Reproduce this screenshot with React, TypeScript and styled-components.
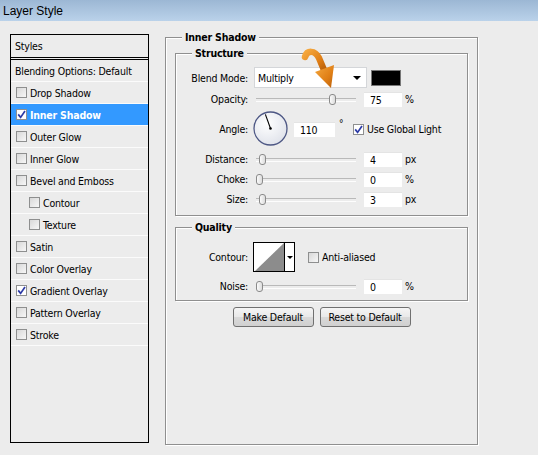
import React from 'react';
import styled, { createGlobalStyle } from 'styled-components';

const uiFont = `"DejaVu Sans Condensed", "DejaVu Sans", "Liberation Sans", sans-serif`;

const GlobalStyle = createGlobalStyle`
	html, body {
		margin: 0;
		padding: 0;
		background: #ececec;
	}
	body {
		width: 538px;
		height: 455px;
		overflow: hidden;
		font-family: ${uiFont};
		font-stretch: condensed;
		font-size: 10.5px;
		letter-spacing: -0.2px;
		color: #000;
	}
	* {
		box-sizing: border-box;
	}
`;

const Window = styled.div`
	position: relative;
	width: 538px;
	height: 455px;
	display: flex;
	flex-direction: column;
	background: #ececec;
`;

const TitleBar = styled.div`
	height: 21px;
	padding-left: 3px;
	display: flex;
	align-items: center;
	background: linear-gradient(#9cb7d4, #bad2ea);
	font-family: "Liberation Sans", sans-serif;
	font-stretch: normal;
	letter-spacing: 0;
	font-size: 12px;
`;

const Body = styled.div`
	display: flex;
	align-items: flex-start;
	padding: 13px 0 0 10px;
`;

/* ---- left list ---- */

const StylesPanel = styled.div`
	width: 139px;
	height: 409px;
	border: 1px solid #000;
	display: flex;
	flex-direction: column;
`;

const StylesHeader = styled.div`
	height: 25px;
	padding-left: 4px;
	display: flex;
	align-items: center;
	border-bottom: 3px double #000;
`;

const StyleRow = styled.div<{ $active?: boolean; $indent?: boolean }>`
	height: 22px;
	display: flex;
	align-items: center;
	gap: 3px;
	padding-left: ${(p) => (p.$indent ? 18 : 5)}px;
	border-bottom: 1px solid #fbfbfb;
	background: ${(p) => (p.$active ? '#3399ff' : 'transparent')};
	color: ${(p) => (p.$active ? '#fff' : '#000')};
	font-weight: ${(p) => (p.$active ? 'bold' : 'normal')};
`;

const PlainRow = styled(StyleRow)`
	padding-left: 4px;
`;

/* ---- checkbox ---- */

const Box = styled.span<{ $white?: boolean }>`
	width: 11px;
	height: 11px;
	flex: none;
	border: 1px solid #8e8f8f;
	background: ${(p) => (p.$white ? '#fff' : 'linear-gradient(135deg, #d8d8d8, #f7f7f7)')};
	display: flex;
	align-items: center;
	justify-content: center;
`;

const CheckBox: React.FC<{ checked?: boolean; white?: boolean }> = ({ checked, white }) => (
	<Box $white={white || checked}>
		{checked && (
			<svg width="9" height="9" viewBox="0 0 9 9">
				<path d="M1.2 4.4 L3.6 7.4 L8 1" fill="none" stroke="#2c3aa6" strokeWidth="1.7" />
			</svg>
		)}
	</Box>
);

/* ---- group boxes ---- */

const Group = styled.div<{ $h: number }>`
	position: relative;
	height: ${(p) => p.$h}px;
	border: 1px solid #8f8f8f;
	box-shadow: 1px 1px 0 #fff, inset 1px 1px 0 #fff;
`;

const Legend = styled.span`
	position: absolute;
	top: -8px;
	left: 16px;
	padding: 0 3px;
	line-height: 14px;
	background: #ececec;
	font-weight: bold;
`;

const OuterGroup = styled(Group)`
	width: 313px;
	margin: 3px 0 0 16px;
	padding: 15px 9px 0 9px;
`;

const StructureGroup = styled(Group)`
	padding-top: 13px;
`;

const QualityGroup = styled(Group)`
	margin-top: 11px;
	padding-top: 14px;
`;

/* ---- field rows ---- */

const Field = styled.div<{ $h: number; $top?: number }>`
	display: flex;
	align-items: center;
	height: ${(p) => p.$h}px;
	margin-top: ${(p) => p.$top ?? 0}px;
`;

const Label = styled.span`
	width: 72px;
	margin-right: 5px;
	text-align: right;
	flex: none;
`;

const Select = styled.div`
	position: relative;
	width: 113px;
	height: 21px;
	margin-left: 1px;
	padding-left: 3px;
	display: flex;
	align-items: center;
	background: #fff;
	border: 1px solid #d4d6d9;
	&::after {
		content: '';
		position: absolute;
		right: 5px;
		top: 8px;
		border: 4px solid transparent;
		border-top: 4px solid #000;
		border-bottom: 0;
	}
`;

const Swatch = styled.div`
	width: 30px;
	height: 16px;
	margin-left: 4px;
	background: #000;
	border: 1px solid #777;
`;

const Track = styled.div`
	position: relative;
	width: 103px;
	height: 16px;
	&::before {
		content: '';
		position: absolute;
		left: 3px;
		right: 0;
		top: 7px;
		height: 2px;
		border-top: 1px solid #b9b9b9;
		border-bottom: 1px solid #fdfdfd;
	}
`;

const Thumb = styled.div`
	position: absolute;
	top: 3px;
	width: 7px;
	height: 11px;
	border: 1px solid #8a8a8a;
	border-radius: 3px;
	background: linear-gradient(90deg, #fbfbfb, #dcdcdc);
`;

const Input = styled.div<{ $w?: number }>`
	width: ${(p) => p.$w ?? 38}px;
	height: 15px;
	padding-left: 6px;
	display: flex;
	align-items: center;
	background: #fff;
	border-top: 1px solid #e4e4e4;
`;

const Unit = styled.span`
	margin-left: 3px;
`;

const Degree = styled.span`
	width: 14px;
	margin-left: 4px;
	align-self: flex-start;
	margin-top: 7px;
	font-size: 10px;
`;

const CheckLabel = styled.label`
	display: flex;
	align-items: center;
	gap: 3px;
`;

const ContourBox = styled.div`
	width: 42px;
	height: 30px;
	display: flex;
	border: 1px solid #000;
	background: #fff;
`;

const ContourDrop = styled.div`
	flex: 1;
	border-left: 1px solid #000;
	display: flex;
	align-items: center;
	justify-content: center;
	&::after {
		content: '';
		border: 3px solid transparent;
		border-top: 3px solid #000;
		border-bottom: 0;
	}
`;

const Buttons = styled.div`
	display: flex;
	justify-content: center;
	gap: 6px;
	margin-top: 6px;
`;

const Button = styled.button<{ $w: number }>`
	width: ${(p) => p.$w}px;
	height: 20px;
	padding: 0;
	border: 1px solid #707070;
	border-radius: 3px;
	background: linear-gradient(#f5f5f5, #e9e9e9 48%, #d9d9d9 52%, #d0d0d0);
	font-family: ${uiFont};
	font-stretch: condensed;
	font-size: 10.5px;
	letter-spacing: -0.2px;
	color: #000;
`;

const ArrowMark = styled.svg`
	position: absolute;
	left: 296px;
	top: 44px;
`;

/* ---- pieces ---- */

const SliderField: React.FC<{ label: string; value: string; unit: string; at: number; top: number }> = ({
	label,
	value,
	unit,
	at,
	top,
}) => (
	<Field $h={16} $top={top}>
		<Label>{label}</Label>
		<Track>
			<Thumb style={{ left: 3 + Math.round(at * 93) }} />
		</Track>
		<Input style={{ marginLeft: 8 }}>{value}</Input>
		<Unit>{unit}</Unit>
	</Field>
);

const Dial: React.FC<{ angle: number }> = ({ angle }) => {
	const r = (angle * Math.PI) / 180;
	const x = 17.5 + Math.cos(r) * 15;
	const y = 17.5 - Math.sin(r) * 15;
	return (
		<svg width="36" height="36" viewBox="0 0 36 36">
			<defs>
				<radialGradient id="dialFill" cx="0.4" cy="0.35" r="0.7">
					<stop offset="0" stopColor="#ffffff" />
					<stop offset="1" stopColor="#dfe2ea" />
				</radialGradient>
			</defs>
			<circle cx="17.5" cy="17.5" r="16.5" fill="url(#dialFill)" stroke="#4d5784" strokeWidth="1.3" />
			<line x1="17.5" y1="17.5" x2={x} y2={y} stroke="#000" strokeWidth="1.1" />
			<circle cx="17.5" cy="17.5" r="1.3" fill="#000" />
		</svg>
	);
};

const styleItems: { name: string; checked?: boolean; active?: boolean; indent?: boolean }[] = [
	{ name: 'Drop Shadow' },
	{ name: 'Inner Shadow', checked: true, active: true },
	{ name: 'Outer Glow' },
	{ name: 'Inner Glow' },
	{ name: 'Bevel and Emboss' },
	{ name: 'Contour', indent: true },
	{ name: 'Texture', indent: true },
	{ name: 'Satin' },
	{ name: 'Color Overlay' },
	{ name: 'Gradient Overlay', checked: true },
	{ name: 'Pattern Overlay' },
	{ name: 'Stroke' },
];

const App: React.FC = () => {
	return (
		<Window>
			<GlobalStyle />
			<TitleBar>Layer Style</TitleBar>
			<Body>
				<StylesPanel>
					<StylesHeader>Styles</StylesHeader>
					<PlainRow>Blending Options: Default</PlainRow>
					{styleItems.map((s) => (
						<StyleRow key={s.name} $active={s.active} $indent={s.indent}>
							<CheckBox checked={s.checked} white={s.active} />
							{s.name}
						</StyleRow>
					))}
				</StylesPanel>

				<OuterGroup $h={408}>
					<Legend>Inner Shadow</Legend>
					<StructureGroup $h={163}>
						<Legend>Structure</Legend>
						<Field $h={21}>
							<Label>Blend Mode:</Label>
							<Select>Multiply</Select>
							<Swatch />
						</Field>
						<SliderField label="Opacity:" value="75" unit="%" at={0.78} top={3} />
						<Field $h={36} $top={4}>
							<Label>Angle:</Label>
							<Dial angle={110} />
							<Input $w={41} style={{ marginLeft: 5 }}>
								110
							</Input>
							<Degree>°</Degree>
							<CheckLabel>
								<CheckBox checked />
								Use Global Light
							</CheckLabel>
						</Field>
						<SliderField label="Distance:" value="4" unit="px" at={0.03} top={4} />
						<SliderField label="Choke:" value="0" unit="%" at={0} top={4} />
						<SliderField label="Size:" value="3" unit="px" at={0.03} top={4} />
					</StructureGroup>

					<QualityGroup $h={74}>
						<Legend>Quality</Legend>
						<Field $h={30}>
							<Label>Contour:</Label>
							<ContourBox>
								<svg width="30" height="28" viewBox="0 0 30 28">
									<polygon points="1,28 30,0 30,28" fill="#8c8c8c" />
								</svg>
								<ContourDrop />
							</ContourBox>
							<CheckLabel style={{ marginLeft: 13 }}>
								<CheckBox />
								Anti-aliased
							</CheckLabel>
						</Field>
						<SliderField label="Noise:" value="0" unit="%" at={0} top={6} />
					</QualityGroup>

					<Buttons>
						<Button $w={81}>Make Default</Button>
						<Button $w={91}>Reset to Default</Button>
					</Buttons>
				</OuterGroup>
			</Body>

			<ArrowMark width="46" height="48" viewBox="0 0 46 48">
				<defs>
					<linearGradient id="arrowFill" x1="0" y1="0" x2="1" y2="1">
						<stop offset="0" stopColor="#f5a83e" />
						<stop offset="0.6" stopColor="#e07f16" />
						<stop offset="1" stopColor="#b9600c" />
					</linearGradient>
				</defs>
				<path
					d="M9 13 C11 6 19 6 23 14 L28 26"
					fill="none"
					stroke="url(#arrowFill)"
					strokeWidth="6.5"
					strokeLinecap="round"
				/>
				<polygon points="19,28 38,21 35,44" fill="url(#arrowFill)" />
			</ArrowMark>
		</Window>
	);
};

export default App;
